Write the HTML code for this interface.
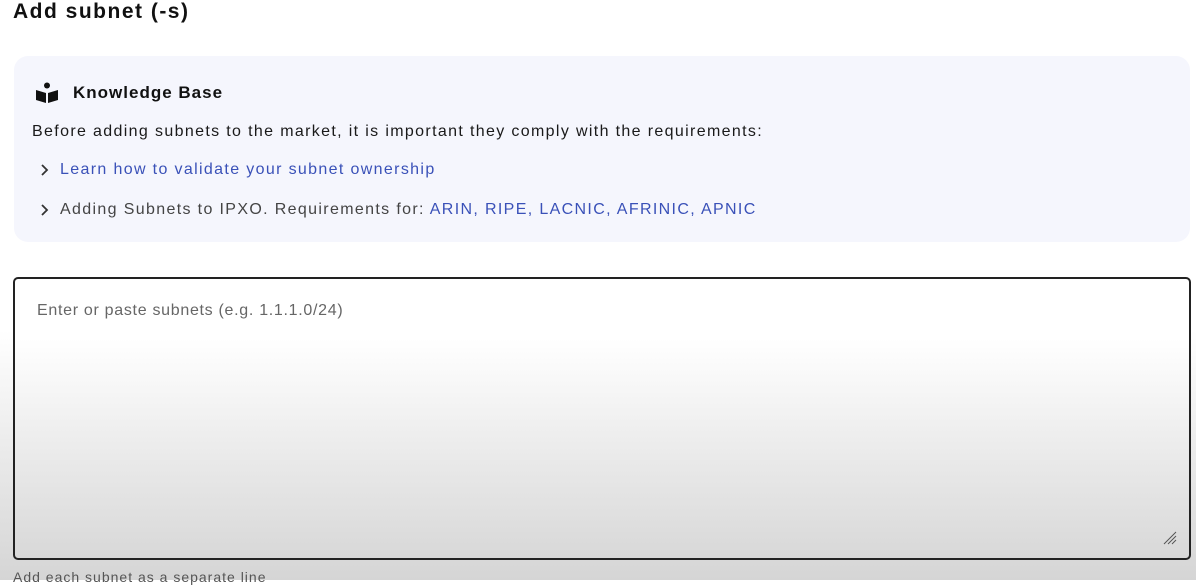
<!DOCTYPE html>
<html><head><style>
body{margin:0;width:1196px;height:580px;overflow:hidden;font-family:"Liberation Sans",sans-serif;background:linear-gradient(#fff 0,#fff 330px,#d5d5d5 580px);position:relative}
.t{position:absolute;left:13px;top:0;font-size:21px;font-weight:bold;color:#111;letter-spacing:1.5px}
.card{position:absolute;left:14px;top:56px;width:1176px;height:186px;background:#f5f6fd;border-radius:14px}
.kb{position:absolute;top:83px;font-size:17px;font-weight:bold;color:#111;letter-spacing:1px}
.p{position:absolute;left:32px;font-size:16px;color:#1a1a1a;letter-spacing:1.35px}
.a{color:#3a51b8}
.g{color:#444}
.ta{position:absolute;left:13px;top:277px;width:1174px;height:279px;border:2px solid #222;border-radius:5px;background:linear-gradient(#fff 0,#fff 60px,#d8d8d8 279px)}
.ph{position:absolute;left:37px;top:302px;font-size:16px;color:#666;letter-spacing:0.7px}
.hint{position:absolute;left:13px;top:569px;font-size:14px;color:#555;letter-spacing:1px}
</style></head><body>
<div class="t">Add subnet (-s)</div>
<div class="card"></div>
<svg style="position:absolute;left:35px;top:82px" width="24" height="22" viewBox="0 0 24 22"><circle cx="12" cy="3.5" r="3" fill="#111"/><path d="M1 8 L11 11 L11 21 L1 18Z M23 8 L13 11 L13 21 L23 18Z" fill="#111"/></svg>
<div class="kb" style="left:73px">Knowledge Base</div>
<div class="p" style="top:123px">Before adding subnets to the market, it is important they comply with the requirements:</div>
<div class="p" style="top:161px;left:60px"><span class="a">Learn how to validate your subnet ownership</span></div>
<div class="p" style="top:201px;left:60px"><span class="g">Adding Subnets to IPXO. Requirements for: </span><span class="a">ARIN, RIPE, LACNIC, AFRINIC, APNIC</span></div>
<svg style="position:absolute;left:40px;top:163px" width="10" height="14"><path d="M2 2 L7 7 L2 12" stroke="#333" stroke-width="1.8" fill="none"/></svg>
<svg style="position:absolute;left:40px;top:203px" width="10" height="14"><path d="M2 2 L7 7 L2 12" stroke="#333" stroke-width="1.8" fill="none"/></svg>
<div class="ta"></div>
<div class="ph">Enter or paste subnets (e.g. 1.1.1.0/24)</div>
<svg style="position:absolute;left:1162px;top:530px" width="16" height="16"><path d="M2 14 L14 2 M6 14 L14 6 M10 14 L14 10" stroke="#555" stroke-width="1"/></svg>
<div class="hint">Add each subnet as a separate line</div>
</body></html>
